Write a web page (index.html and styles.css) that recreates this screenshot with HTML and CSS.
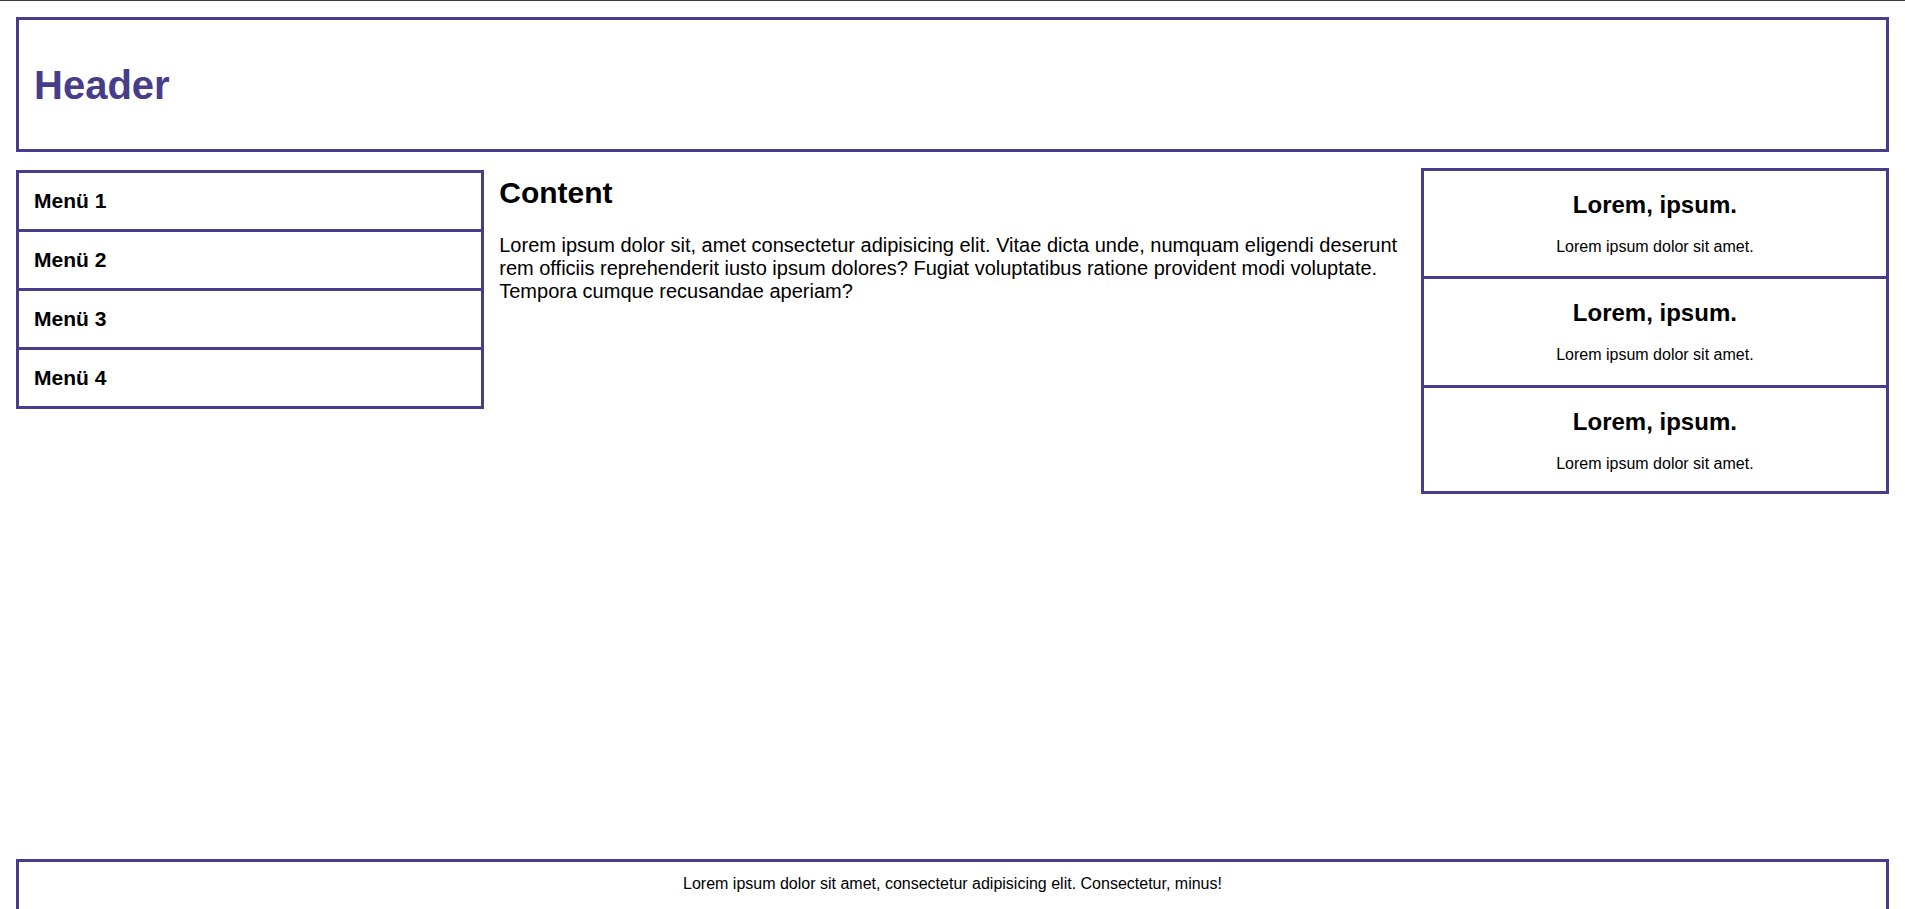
FILE: index.html
```html
<!DOCTYPE html>
<html lang="de">
<head>
<meta charset="utf-8">
<title>Layout</title>
<link rel="stylesheet" href="styles.css">
</head>
<body>
<header class="site-header">
  <h1 class="site-title">Header</h1>
</header>
<div class="layout">
  <nav class="menu">
    <ul class="menu-list">
      <li class="menu-item">Menü 1</li>
      <li class="menu-item">Menü 2</li>
      <li class="menu-item">Menü 3</li>
      <li class="menu-item">Menü 4</li>
    </ul>
  </nav>
  <main class="content">
    <h2 class="content-title">Content</h2>
    <p class="content-text">Lorem ipsum dolor sit, amet consectetur adipisicing elit. Vitae dicta unde, numquam eligendi deserunt rem officiis reprehenderit iusto ipsum dolores? Fugiat voluptatibus ratione provident modi voluptate. Tempora cumque recusandae aperiam?</p>
  </main>
  <aside class="sidebar">
    <div class="card">
      <h3 class="card-title">Lorem, ipsum.</h3>
      <p class="card-text">Lorem ipsum dolor sit amet.</p>
    </div>
    <div class="card">
      <h3 class="card-title">Lorem, ipsum.</h3>
      <p class="card-text">Lorem ipsum dolor sit amet.</p>
    </div>
    <div class="card">
      <h3 class="card-title">Lorem, ipsum.</h3>
      <p class="card-text">Lorem ipsum dolor sit amet.</p>
    </div>
  </aside>
</div>
<footer class="site-footer">
  <p class="footer-text">Lorem ipsum dolor sit amet, consectetur adipisicing elit. Consectetur, minus!</p>
</footer>
</body>
</html>
```

FILE: styles.css
```css
html, body {
  margin: 0;
}

body {
  border-top: 1px solid #3c3c3c;
  padding: 16px;
  font-family: "Liberation Sans", Arial, sans-serif;
  color: #000;
  background: #fff;
}

.site-header {
  border: 3px solid #483d8b;
  padding: 41.5px 15px;
}

.site-title {
  margin: 0;
  font-size: 40px;
  line-height: 46px;
  font-weight: bold;
  color: #483d8b;
}

.layout {
  display: grid;
  grid-template-columns: 25% 50% 25%;
  align-items: start;
  margin-top: 16px;
  min-height: 675px;
}

.menu {
  margin-top: 2px;
  border: 3px solid #483d8b;
}

.menu-list {
  list-style: none;
  margin: 0;
  padding: 0;
}

.menu-item {
  padding: 16px 15px;
  font-size: 21px;
  line-height: 24px;
  font-weight: bold;
}

.menu-item + .menu-item {
  border-top: 3px solid #483d8b;
}

.content {
  padding: 0 15px;
}

.content-title {
  margin: 8px 0 24px;
  font-size: 30px;
  line-height: 34px;
  font-weight: bold;
}

.content-text {
  margin: 0;
  font-size: 20px;
  line-height: 23px;
}

.sidebar {
  border: 3px solid #483d8b;
}

.card {
  padding: 20px 0 20px;
  text-align: center;
}

.card + .card {
  border-top: 3px solid #483d8b;
}

.card:nth-child(2) {
  padding-bottom: 21px;
}

.card:last-child {
  padding-bottom: 18px;
}

.card-title {
  margin: 0 0 19px;
  font-size: 24px;
  line-height: 28px;
  font-weight: bold;
}

.card-text {
  margin: 0;
  font-size: 16px;
  line-height: 18px;
}

.site-footer {
  margin-top: 16px;
  border: 3px solid #483d8b;
  padding: 13px 16px 40px;
  text-align: center;
}

.footer-text {
  margin: 0;
  font-size: 16px;
  line-height: 18px;
}
```
